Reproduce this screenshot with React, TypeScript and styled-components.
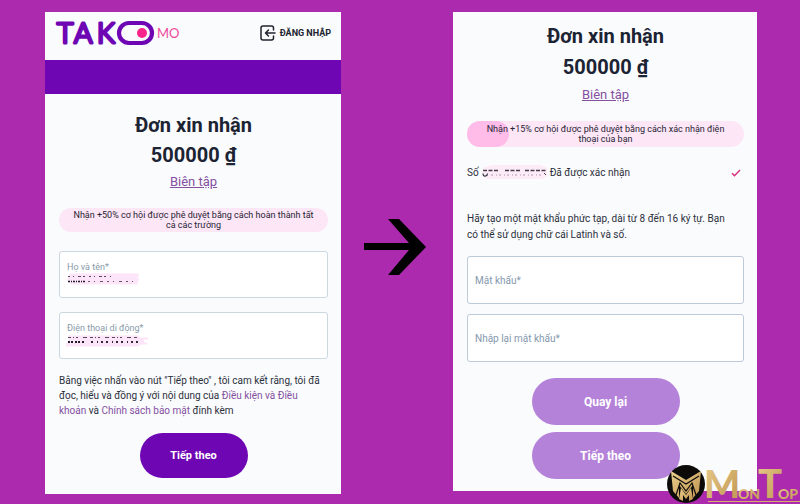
import React from 'react';
import styled, { createGlobalStyle } from 'styled-components';

const GlobalStyle = createGlobalStyle`
  * { box-sizing: border-box; }
  body {
    margin: 0;
    background: #ac2aad;
    font-family: Roboto, "Open Sans", sans-serif;
    color: #2b303b;
  }
  h1, p { margin: 0; }
`;

const Page = styled.main`
  position: relative;
  min-height: 100vh;
  overflow: hidden;
  display: grid;
  grid-template-columns: 296fr 112fr 304fr;
  align-items: start;
  padding: 12px 43px 10px 45px;
`;

const Panel = styled.section`
  background: #fafbfd;
`;

const Header = styled.header`
  display: flex;
  align-items: center;
  justify-content: space-between;
  height: 48px;
  padding: 0 10px;
`;

const LogoArt = styled.svg`
  display: block;
  overflow: visible;
  margin-bottom: 6px;
`;

const LoginLink = styled.a`
  display: flex;
  align-items: center;
  gap: 4px;
  margin-bottom: 6px;
  font-size: 9px;
  line-height: 16px;
  font-weight: 700;
  color: #20242e;
  text-decoration: none;
`;

const Band = styled.div`
  height: 34px;
  background: #6f06b4;
`;

const Form = styled.form<{ $top: number; $bottom: number }>`
  display: flex;
  flex-direction: column;
  padding: ${(p) => p.$top}px 13px ${(p) => p.$bottom}px 14px;
`;

const Title = styled.h1<{ $line: number }>`
  font-size: 20px;
  line-height: ${(p) => p.$line}px;
  font-weight: 700;
  text-align: center;
  color: #1c2333;
`;

const EditLink = styled.a<{ $size: number }>`
  align-self: center;
  margin-top: 2px;
  font-size: ${(p) => p.$size}px;
  line-height: 20px;
  color: #8450a0;
`;

const Notice = styled.p<{ $pad: number; $progress?: number }>`
  position: relative;
  z-index: 0;
  margin-top: 16px;
  padding: ${(p) => p.$pad}px 10px;
  border-radius: 13px;
  background: #fde6f6;
  font-size: 9px;
  line-height: 10px;
  text-align: center;
  color: #262334;
  &::before {
    content: "";
    position: absolute;
    z-index: -1;
    inset: 0 auto 0 0;
    width: ${(p) => p.$progress ?? 0}%;
    border-radius: 13px;
    background: #ffbce8;
  }
`;

const Fields = styled.div<{ $top: number; $gap: number }>`
  display: grid;
  gap: ${(p) => p.$gap}px;
  margin-top: ${(p) => p.$top}px;
`;

const FilledField = styled.label`
  position: relative;
  display: flex;
  flex-direction: column;
  height: 47px;
  padding: 9px 7px 6px;
  border: 1px solid #ccd8e0;
  border-radius: 3px;
  background: #ffffff;
  font-size: 9px;
  line-height: 12px;
  color: #8799a9;
`;

const FilledInput = styled.input`
  width: 100%;
  height: 14px;
  padding: 0;
  border: 0;
  outline: 0;
  background: transparent;
  font: inherit;
`;

const FieldMask = styled.svg`
  position: absolute;
  left: 5px;
  top: 20px;
  pointer-events: none;
`;

const PasswordInput = styled.input`
  width: 100%;
  height: 48px;
  padding: 0 7px;
  border: 1px solid #bccad9;
  border-radius: 3px;
  background: #ffffff;
  font-family: inherit;
  font-size: 10px;
  color: #2b303b;
  &::placeholder { color: #8598ad; opacity: 1; }
`;

const Copy = styled.p<{ $top: number; $line: number }>`
  margin-top: ${(p) => p.$top}px;
  font-size: 10px;
  line-height: ${(p) => p.$line}px;
  white-space: nowrap;
`;

const TermsLink = styled.a`
  color: #8450a0;
  text-decoration: none;
`;

const PhoneRow = styled.div`
  display: flex;
  align-items: center;
  height: 16px;
  margin-top: 18px;
  padding-right: 3px;
  font-size: 10px;
  line-height: 16px;
  gap: 2px;
`;

const CheckIcon = styled.svg`
  margin-left: auto;
`;

const Actions = styled.div<{ $top: number }>`
  display: flex;
  flex-direction: column;
  align-items: center;
  gap: 7px;
  margin-top: ${(p) => p.$top}px;
`;

const PillButton = styled.button<{ $muted?: boolean }>`
  width: ${(p) => (p.$muted ? 148 : 108)}px;
  height: ${(p) => (p.$muted ? 47 : 45)}px;
  padding: 0;
  border: 0;
  border-radius: 24px;
  background: ${(p) => (p.$muted ? '#b582da' : '#6f06b4')};
  color: #ffffff;
  font-family: inherit;
  font-size: ${(p) => (p.$muted ? 12 : 11)}px;
  font-weight: 700;
`;

const Arrow = styled.svg`
  align-self: center;
  justify-self: center;
  margin: 0 4px 12px 0;
`;

const Watermark = styled.svg`
  position: absolute;
  right: 0;
  bottom: 0;
  overflow: visible;
`;

const Logo = () => (
  <LogoArt width="126" height="26" viewBox="0 0 126 26" role="img" aria-label="Takomo">
    <g fill="#6f06b4" stroke="#6f06b4" strokeWidth="3.2" strokeLinejoin="round" fontFamily="Lato" fontWeight="300" fontSize="28">
      <text x="2" y="23">T</text>
      <text x="19" y="23">A</text>
      <text x="42" y="23">K</text>
    </g>
    <rect x="64" y="3" width="33" height="20" rx="10" fill="#fafbfd" stroke="#6f06b4" strokeWidth="4.2" />
    <circle cx="87" cy="13" r="5" fill="#f9258a" />
    <text x="102" y="18" fill="#ef4a9c" fontFamily="Lato" fontSize="13">MO</text>
  </LogoArt>
);

const LoginIcon = () => (
  <svg width="16" height="16" viewBox="0 0 16 16" fill="none" stroke="#20242e" strokeWidth="1.5" strokeLinecap="round" strokeLinejoin="round" aria-hidden="true">
    <path d="M13.5 5V3a2 2 0 0 0-2-2H3a2 2 0 0 0-2 2v10a2 2 0 0 0 2 2h8.500a2 2 0 0 0 2-2v-2" />
    <path d="M15 8H5.500M8.500 5L5.500 8l3 3" />
  </svg>
);

const NameMask = () => (
  <FieldMask width="82" height="14" viewBox="0 0 82 14" aria-hidden="true">
    <path d="M5 1.500H74l-1 4 1 2-2 5H6L4 10l-2-2z" fill="#fce5f8" />
    <path d="M3 4.500H46" stroke="#544858" strokeWidth="1.200" strokeDasharray="2 3 1 4 3 2 2 4" />
    <path d="M3 9.500H20" stroke="#201b29" strokeWidth="1.600" strokeDasharray="2 1 1 1" />
    <path d="M23 9.500H68" stroke="#665766" strokeWidth="1.200" strokeDasharray="2 4 1 5 3 4" />
  </FieldMask>
);

const MobileMask = () => (
  <FieldMask width="86" height="14" viewBox="0 0 86 14" aria-hidden="true">
    <path d="M3 2.500H74l1 2h8v2h-4v3h3v2H76l-3 2H1V10l3-2z" fill="#fce5f8" />
    <path d="M3 4.500H73" stroke="#544858" strokeWidth="1" strokeDasharray="3 2 1 2 2 5 4 3" />
    <path d="M3 9H19" stroke="#201b29" strokeWidth="2" strokeDasharray="2 1 2 2" />
    <path d="M26 9H73" stroke="#332a38" strokeWidth="2" strokeDasharray="2 4 1 3 2 3" />
  </FieldMask>
);

const PhoneMask = () => (
  <svg width="67" height="18" viewBox="0 0 67 18" aria-hidden="true">
    <path d="M2 4L10 1H60l6 3v8l-5 3H6l-4-3z" fill="#fdebf8" />
    <path d="M2 6.500H17M24 6.500H39M44 6.500H65" stroke="#463d4b" strokeWidth="1.600" strokeDasharray="4 1.500" />
    <path d="M2 9.500q0 3 2.500 2.500 2-.5 2-2.500" fill="none" stroke="#2b303b" strokeWidth="1.200" />
    <path d="M10 11H62" stroke="#b09aae" strokeWidth="1" strokeDasharray="2 3 1 2" />
    <path d="M63 9l2 2" stroke="#463d4b" strokeWidth="1" />
  </svg>
);

const Brand = () => (
  <Watermark width="136" height="40" viewBox="0 0 136 40" role="img" aria-label="MonTop">
    <defs>
      <linearGradient id="gold" x1="0" y1="0" x2="1" y2="1">
        <stop offset="0" stopColor="#e9cd8c" />
        <stop offset="1" stopColor="#bf934f" />
      </linearGradient>
    </defs>
    <circle cx="22" cy="20" r="19" fill="#0c0b0a" />
    <path d="M7 7L22 16 37 7 35 27 29 34V21L22 30 15 21V34L9 27z" fill="url(#gold)" />
    <path d="M9 12L22 20 35 12M12 31L16 19 22 27 28 19 32 31" fill="none" stroke="#0c0b0a" strokeWidth="1.200" />
    <path d="M15 35L17 24 22 31 27 24 29 35 25 37V31L22 35 19 31V37z" fill="url(#gold)" />
    <g fill="url(#gold)" fontFamily="Lato" fontWeight="900">
      <text x="40" y="34" fontSize="38">M</text>
      <text x="74" y="35" fontSize="14">ON</text>
      <text x="94" y="34" fontSize="40">T</text>
      <text x="114" y="35" fontSize="14">OP</text>
    </g>
    <path d="M44 37.500H136" stroke="#d6ac6d" strokeWidth="1" />
  </Watermark>
);

export default function App() {
  const stay = (e: React.FormEvent) => e.preventDefault();
  return (
    <>
      <GlobalStyle />
      <Page>
        <Panel>
          <Header>
            <Logo />
            <LoginLink href="#login">
              <LoginIcon />
              ĐĂNG NHẬP
            </LoginLink>
          </Header>
          <Band />
          <Form $top={16} $bottom={16} onSubmit={stay}>
            <Title $line={30}>Đơn xin nhận<br />500000 ₫</Title>
            <EditLink href="#edit" $size={13}>Biên tập</EditLink>
            <Notice $pad={2}>Nhận +50% cơ hội được phê duyệt bằng cách hoàn thành tất cả các trường</Notice>
            <Fields $top={19} $gap={14}>
              <FilledField>
                Họ và tên*
                <FilledInput type="text" name="fullName" />
                <NameMask />
              </FilledField>
              <FilledField>
                Điện thoại di động*
                <FilledInput type="tel" name="phone" />
                <MobileMask />
              </FilledField>
            </Fields>
            <Copy $top={14} $line={15}>
              Bằng việc nhấn vào nút "Tiếp theo" , tôi cam kết rằng, tôi đã<br />
              đọc, hiểu và đồng ý với nội dung của <TermsLink href="#terms">Điều kiện và Điều<br />khoản</TermsLink> và{' '}
              <TermsLink href="#privacy">Chính sách bảo mật</TermsLink> đính kèm
            </Copy>
            <Actions $top={15}>
              <PillButton type="submit">Tiếp theo</PillButton>
            </Actions>
          </Form>
        </Panel>

        <Arrow width="64" height="56" viewBox="0 0 64 56" aria-hidden="true">
          <path d="M1 24H46L25 0H36L63 28 36 56H25L46 31H1z" />
        </Arrow>

        <Panel>
          <Form $top={9} $bottom={12} onSubmit={stay}>
            <Title $line={31}>Đơn xin nhận<br />500000 ₫</Title>
            <EditLink href="#edit-amount" $size={13}>Biên tập</EditLink>
            <Notice $pad={3} $progress={15}>Nhận +15% cơ hội được phê duyệt bằng cách xác nhận điện thoại của bạn</Notice>
            <PhoneRow>
              <span>Số</span>
              <PhoneMask />
              <span>Đã được xác nhận</span>
              <CheckIcon width="10" height="8" viewBox="0 0 10 8" role="img" aria-label="Đã được xác nhận">
                <path d="M1 4.200L3.500 6.800 9 1" fill="none" stroke="#d82c7c" strokeWidth="1.400" />
              </CheckIcon>
            </PhoneRow>
            <Copy $top={30} $line={16}>
              Hãy tạo một mật khẩu phức tạp, dài từ 8 đến 16 ký tự. Bạn<br />
              có thể sử dụng chữ cái Latinh và số.
            </Copy>
            <Fields $top={13} $gap={10}>
              <PasswordInput type="password" aria-label="Mật khẩu" placeholder="Mật khẩu*" />
              <PasswordInput type="password" aria-label="Nhập lại mật khẩu" placeholder="Nhập lại mật khẩu*" />
            </Fields>
            <Actions $top={16}>
              <PillButton type="button" $muted>Quay lại</PillButton>
              <PillButton type="submit" $muted>Tiếp theo</PillButton>
            </Actions>
          </Form>
        </Panel>
        <Brand />
      </Page>
    </>
  );
}
